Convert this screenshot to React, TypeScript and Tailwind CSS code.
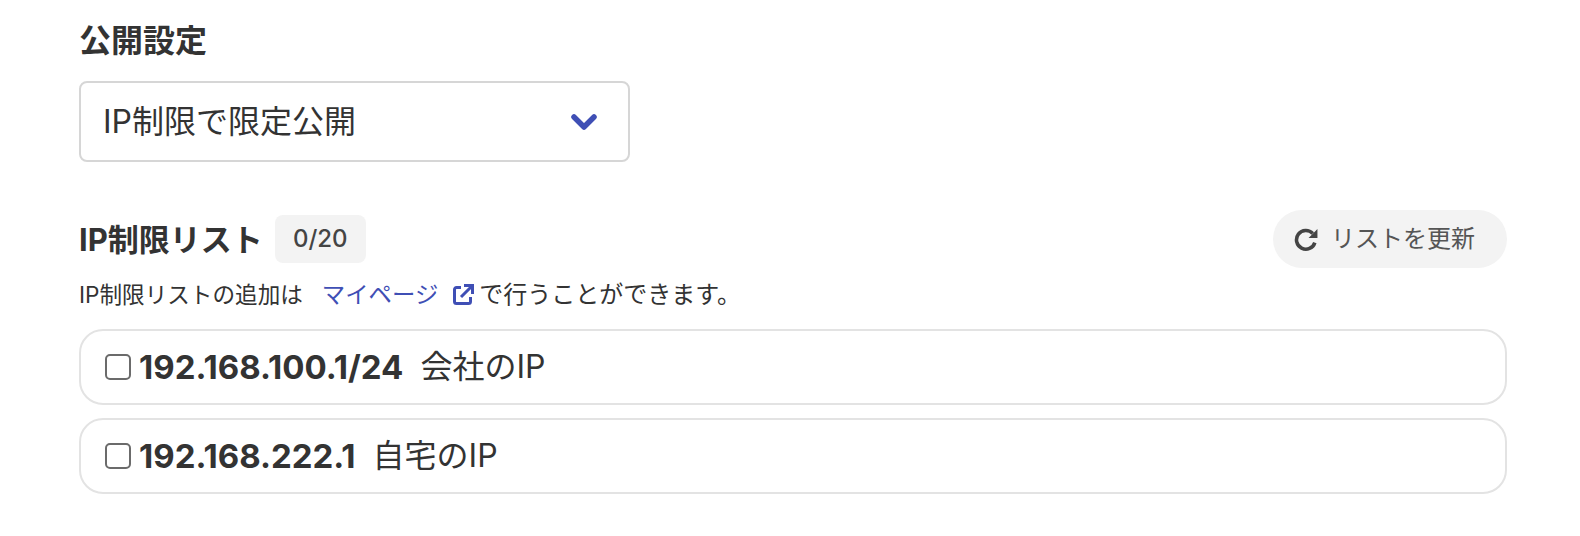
import React from "react";

const font = "font-['Inter','Noto_Sans_CJK_JP',sans-serif]";

function Row({ ip, label }: { ip: string; label: string }) {
  return (
    <div className="flex h-[76px] items-center rounded-[24px] border-2 border-[#e3e3e3] pl-[24px]">
      <span className="h-[26px] w-[26px] shrink-0 rounded-[5px] border-2 border-[#6b6b6b] bg-white" />
      <span className="ml-[8px] text-[33px] font-bold leading-none text-[#333]">{ip}</span>
      <span className="ml-[17px] text-[32px] leading-none text-[#333]">{label}</span>
    </div>
  );
}

export default function App() {
  return (
    <div className={`${font} h-[536px] w-[1580px] overflow-hidden bg-white pl-[79px] pr-[73px] pt-[20px] text-[#333]`}>
      <h2 className="text-[32px] font-bold leading-[42px]">公開設定</h2>
      <div className="mt-[19px] flex h-[81px] w-[551px] items-center justify-between rounded-[8px] border-2 border-[#d6d6d6] pl-[22px] pr-[30px]">
        <span className="text-[32px] leading-none">IP制限で限定公開</span>
        <svg width="28" height="18" viewBox="0 0 28 18" fill="none">
          <path d="M4 4l10 10L24 4" stroke="#3f4fb5" strokeWidth="5.5" strokeLinecap="round" strokeLinejoin="round" />
        </svg>
      </div>
      <div className="mt-[48px] flex h-[58px] items-center justify-between">
        <div className="flex items-center">
          <h3 className="text-[31px] font-bold leading-none">IP制限リスト</h3>
          <span className="ml-[12px] flex h-[48px] w-[91px] items-center justify-center rounded-[8px] bg-[#f3f3f3] text-[24px] font-medium text-[#444]">0/20</span>
        </div>
        <button className="flex h-[58px] w-[234px] items-center justify-center rounded-full bg-[#f3f3f3] pr-[11px] text-[24px] text-[#555]">
          <svg width="25" height="25" viewBox="0 0 24 24" fill="none" className="mr-[12px]">
            <path d="M18 6.2A9 9 0 1 0 20 15" stroke="#444" strokeWidth="3.4" />
            <path d="M22.5 2v8.5H14z" fill="#444" />
          </svg>
          リストを更新
        </button>
      </div>
      <p className="mt-[10px] flex h-[34px] items-center text-[22.6px] leading-none">
        IP制限リストの追加は
        <span className="ml-[19px] text-[23.4px] text-[#3f4fb5]">マイページ</span>
        <svg width="22" height="22" viewBox="0 0 22 22" fill="none" className="ml-[14px]">
          <path d="M9 3.5H4.5a2 2 0 0 0-2 2v12a2 2 0 0 0 2 2h12a2 2 0 0 0 2-2V13" stroke="#3f4fb5" strokeWidth="3" />
          <path d="M9 13L19 3" stroke="#3f4fb5" strokeWidth="3" />
          <path d="M12 1.5h8.5V10" stroke="#3f4fb5" strokeWidth="3" />
        </svg>
        <span className="ml-[5px] text-[24px]">で行うことができます。</span>
      </p>
      <div className="mt-[17px] flex flex-col gap-[13px]">
        <Row ip="192.168.100.1/24" label="会社のIP" />
        <Row ip="192.168.222.1" label="自宅のIP" />
      </div>
    </div>
  );
}
